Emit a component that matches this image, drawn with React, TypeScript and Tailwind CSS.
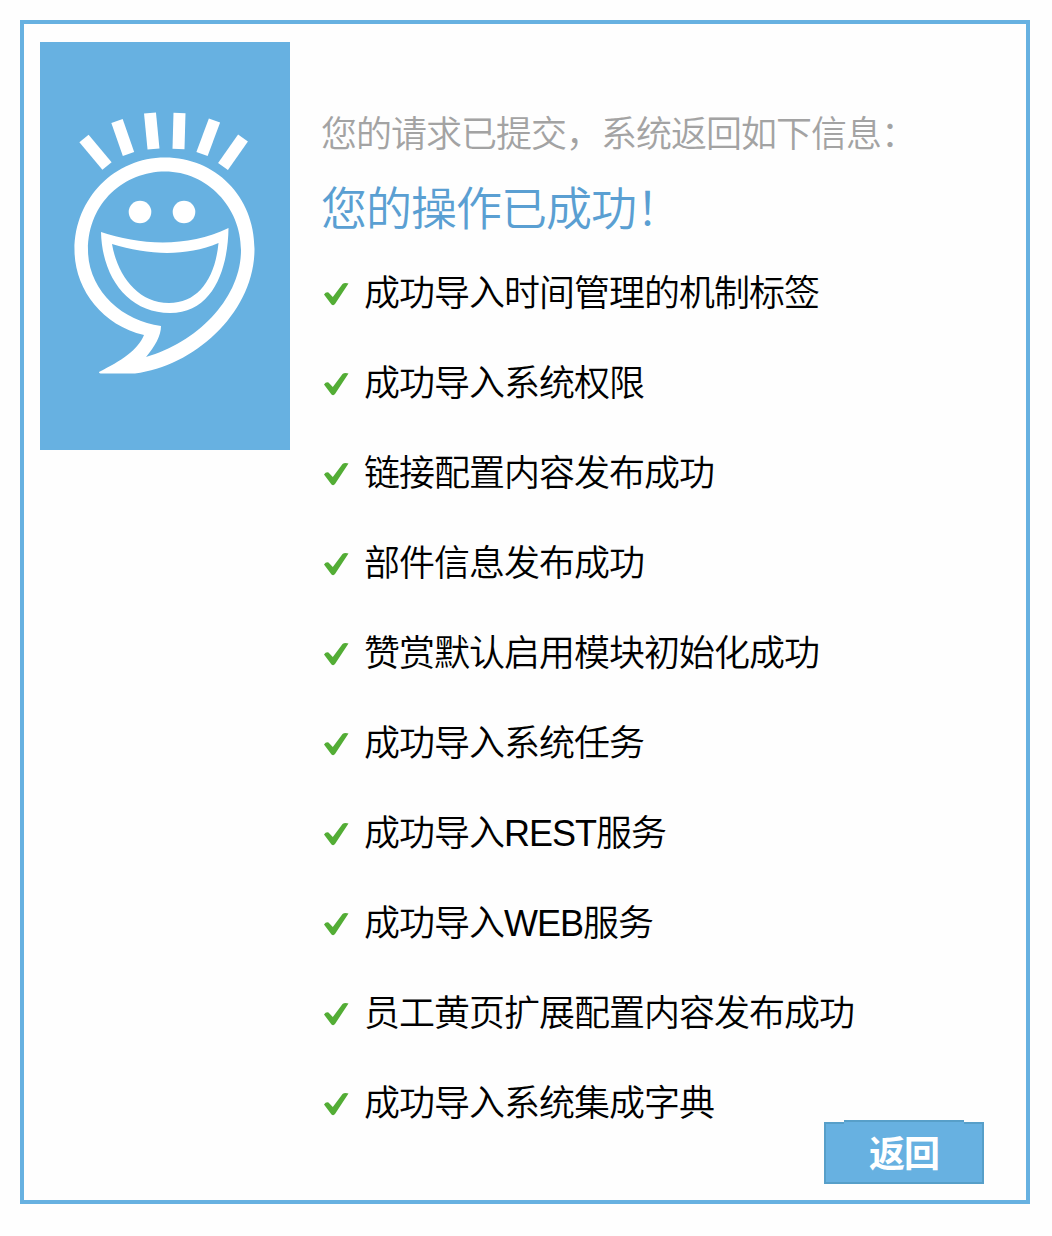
const messages = [
  "成功导入时间管理的机制标签",
  "成功导入系统权限",
  "链接配置内容发布成功",
  "部件信息发布成功",
  "赞赏默认启用模块初始化成功",
  "成功导入系统任务",
  "成功导入REST服务",
  "成功导入WEB服务",
  "员工黄页扩展配置内容发布成功",
  "成功导入系统集成字典",
];

function SmileBubble() {
  return (
    <svg viewBox="0 0 250 408" className="h-full w-full" fill="none" aria-hidden="true">
      <g stroke="#fff" strokeWidth="12">
        <path d="M44 96.500L67 124" />
        <path d="M77 79L88.500 112" />
        <path d="M110 71L113.500 107" />
        <path d="M139.500 71L138.500 107" />
        <path d="M174.500 78.500L162 112" />
        <path d="M203 96L183 124.500" />
      </g>
      <circle cx="100" cy="170" r="11.300" fill="#fff" />
      <circle cx="144" cy="170" r="11.300" fill="#fff" />
      <path
        fill="#fff"
        fillRule="evenodd"
        d="M125 115.500C75 115.500 34.500 156 34.500 208C34.500 246 61 283 104 293C98 308 81 319 59 330Q59 331.500 62 331.500H95C155 324 214.500 270 214.500 207C214.500 154 175 115.500 125 115.500ZM125 129.500C85 129.500 48 160 48 208C48 248 82 279 121 284C121 294 115 304 106 315C158 300 201 256 201 208C201 165 167 129.500 125 129.500Z"
      />
      <path
        fill="#fff"
        fillRule="evenodd"
        d="M61 190C99 203 148 206 188.500 186C188 227 173 271 130 271C88 271 62 235 61 190ZM72 202C77 232 97 261 129 261C158 261 175 237 178.500 201C145 215 108 213 72 202Z"
      />
    </svg>
  );
}

function Check() {
  return (
    <svg viewBox="0 0 28 28" className="mt-0.5 h-7 w-7 shrink-0" aria-hidden="true">
      <path
        d="M2 14.500Q4 11.500 6.500 12.500L10.800 17L20.500 4Q22.500 2.500 26.500 3.500L13 24Q11.500 26 9.500 24.500Z"
        fill="#53ad35"
      />
    </svg>
  );
}

export default function App() {
  return (
    <div lang="zh-CN" className="h-[1236px] w-[1052px] bg-[#fefefe] p-5 font-['Liberation_Sans','Noto_Sans_CJK_SC',sans-serif] tracking-[-1px]">
      <main className="flex h-[1184px] w-[1010px] border-4 border-[#67b1e1] px-4 pt-[18px]">
        <aside className="h-[408px] w-[250px] shrink-0 bg-[#67b1e1]">
          <SmileBubble />
        </aside>
        <section className="ml-[31px] flex-1 whitespace-nowrap pt-[66px]">
          <p className="h-[54px] text-[36px] leading-[54px] font-[350] text-[#a3a3a3]">
            您的请求已提交，系统返回如下信息：
          </p>
          <h1 className="mt-[11px] h-[75px] text-[46px] leading-[72px] font-[350] text-[#5a9fd2]">您的操作已成功！</h1>
          <ul>
            {messages.map((message) => (
              <li key={message} className="flex h-[90px] items-center gap-3.5 pl-px text-[36px] leading-none font-[350] text-black">
                <Check />
                <span className="pt-0.5">{message}</span>
              </li>
            ))}
          </ul>
          <div className="-mt-7 flex justify-end pr-[26px]">
            <button className="grid h-16 w-40 grid-cols-[20px_120px_20px] text-[36px] leading-none font-bold text-white">
              <span className="mt-0.5 h-[62px] border-2 border-r-0 border-[#579fc9] bg-[#67b1e1]" />
              <span className="flex h-16 items-center justify-center border-y-2 border-[#579fc9] bg-[#67b1e1] pt-1.5">返回</span>
              <span className="mt-0.5 h-[62px] border-2 border-l-0 border-[#579fc9] bg-[#67b1e1]" />
            </button>
          </div>
        </section>
      </main>
    </div>
  );
}
